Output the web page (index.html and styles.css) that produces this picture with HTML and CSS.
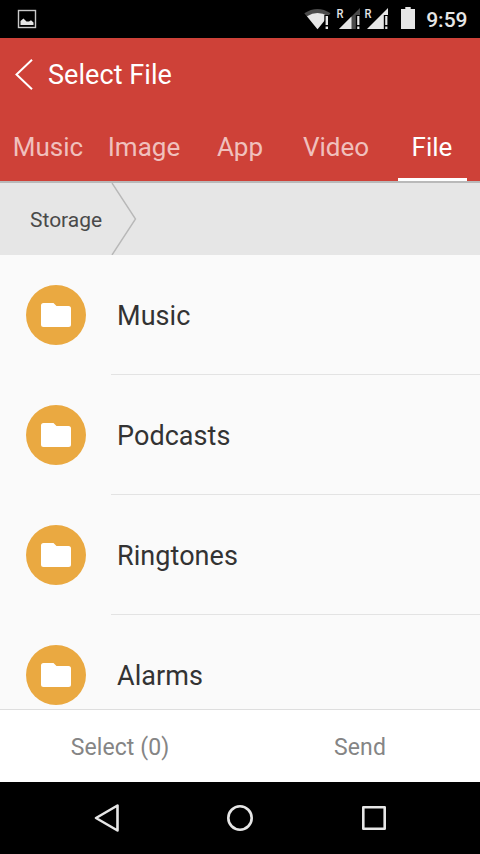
FILE: index.html
```html
<!DOCTYPE html>
<html lang="en">
<head>
<meta charset="utf-8">
<title>Select File</title>
<link rel="stylesheet" href="styles.css">
</head>
<body>
<svg class="defs" width="0" height="0" aria-hidden="true">
  <symbol id="folder" viewBox="0 0 30 24">
    <path d="M2.500 0H12.500L15.500 3H27.500Q30 3 30 5.500V21.500Q30 24 27.500 24H2.500Q0 24 0 21.500V2.500Q0 0 2.500 0Z" fill="#fff"/>
  </symbol>
</svg>
<div class="screen">
  <div class="status">
    <svg class="picture" width="20" height="20" viewBox="0 0 20 20">
      <rect x="1.500" y="1.500" width="17" height="17" fill="none" stroke="#c9c9c9" stroke-width="1.400"/>
      <path d="M3.500 16V12L6.500 9.500 9.500 12.500 12 12.500 14 11.300 16.500 13.500V16Z" fill="#e6e6e6"/>
    </svg>
    <svg class="signals" width="116" height="38" viewBox="302 0 116 38">
      <path d="M304.300 13.300Q317.500 4.500 330.500 13.300L317.500 29.200Z" fill="#4a4a4a"/>
      <path d="M307 16.200Q317.500 9.800 328 16.200L317.500 29.200Z" fill="#e6e6e6"/>
      <path d="M324.300 15H330.500V30H324.300Z" fill="#000"/>
      <path d="M325.600 16H328V25H325.600ZM325.600 26.500H328V29H325.600Z" fill="#e6e6e6"/>
      <path d="M339 29L360 8V29Z" fill="#4a4a4a"/>
      <path d="M339 29L351.500 16.500V29Z" fill="#e6e6e6"/>
      <path d="M355.800 15H361V30H355.800Z" fill="#000"/>
      <path d="M357.200 16H359.400V25H357.200ZM357.200 26.500H359.400V29H357.200Z" fill="#e6e6e6"/>
      <path d="M367 29L388 8V29Z" fill="#e6e6e6"/>
      <path d="M383.800 15H389V30H383.800Z" fill="#000"/>
      <path d="M385.200 16H387.400V25H385.200ZM385.200 26.500H387.400V29H385.200Z" fill="#e6e6e6"/>
      <text class="roam" x="336.500" y="17.500" textLength="7" lengthAdjust="spacingAndGlyphs">R</text>
      <text class="roam" x="364.500" y="17.500" textLength="7" lengthAdjust="spacingAndGlyphs">R</text>
      <path d="M405.300 7H410.700V9H415V29H401V9H405.300Z" fill="#e6e6e6"/>
    </svg>
    <span class="clock">9:59</span>
  </div>
  <header class="header">
    <div class="titlebar">
      <svg class="back" width="20" height="34" viewBox="0 0 20 34"><path d="M18 1.800L2.500 16.500 18 31.200" fill="none" stroke="#fff" stroke-width="2"/></svg>
      <h1 class="title">Select File</h1>
    </div>
    <nav class="tabs">
      <span class="tab"><span class="label">Music</span></span>
      <span class="tab"><span class="label">Image</span></span>
      <span class="tab"><span class="label">App</span></span>
      <span class="tab"><span class="label">Video</span></span>
      <span class="tab active"><span class="label">File</span></span>
    </nav>
  </header>
  <div class="crumbs">
    <span class="crumb">Storage</span>
    <svg width="26" height="72" viewBox="0 0 26 72"><path d="M1 0L24.500 36 1 72" fill="none" stroke="#b8b8b8" stroke-width="1.400"/></svg>
  </div>
  <main class="list">
    <div class="row"><span class="disc"><svg width="30" height="24"><use href="#folder"/></svg></span><span class="name">Music</span></div>
    <div class="row"><span class="disc"><svg width="30" height="24"><use href="#folder"/></svg></span><span class="name">Podcasts</span></div>
    <div class="row"><span class="disc"><svg width="30" height="24"><use href="#folder"/></svg></span><span class="name">Ringtones</span></div>
    <div class="row"><span class="disc"><svg width="30" height="24"><use href="#folder"/></svg></span><span class="name">Alarms</span></div>
  </main>
  <footer class="actions">
    <span class="action">Select (0)</span>
    <span class="action">Send</span>
  </footer>
  <div class="navbar">
    <svg width="480" height="72" viewBox="0 782 480 72" fill="none" stroke="#e6e6e6" stroke-width="2.600" stroke-linejoin="round">
      <path d="M117.500 805.500V830.500L96 818Z"/>
      <circle cx="240" cy="818" r="11.700"/>
      <rect x="363.300" y="807.300" width="21.400" height="21.400"/>
    </svg>
  </div>
</div>
</body>
</html>
```
FILE: styles.css
```css
* { box-sizing: border-box; }
body { margin: 0; font-family: Roboto, sans-serif; }
.defs { display: none; }
.screen { display: flex; flex-direction: column; width: 480px; height: 854px; overflow: hidden; background: #fafafa; }
.status { display: flex; align-items: center; flex: 0 0 38px; padding: 0 12.5px 0 17px; background: #000; color: #e6e6e6; }
.picture { margin-top: -1px; }
.signals { margin-left: auto; }
.roam { font-size: 12px; font-weight: 500; fill: #e6e6e6; }
.clock { width: 42px; margin-left: 7.5px; padding-top: 2px; font-size: 21px; line-height: 36px; font-weight: 500; text-align: right; white-space: nowrap; }
.header { flex: 0 0 143px; background: #ce4138; color: #fff; }
.titlebar { display: flex; align-items: center; height: 73px; padding-left: 14px; }
.title { margin: 0 0 0 14px; font-size: 27px; line-height: 32px; font-weight: 400; letter-spacing: 0.06px; }
.tabs { display: flex; height: 70px; }
.tab { display: flex; justify-content: center; flex: 1; padding-top: 19px; font-size: 26px; line-height: 34px; color: #f0c0bd; }
.active { color: #fff; }
.active .label { width: 69px; height: 51px; border-bottom: 3px solid #fff; text-align: center; }
.crumbs { display: flex; align-items: center; flex: 0 0 74px; padding-left: 30px; border-top: 2px solid #b9b9b9; background: #e6e6e6; }
.crumb { width: 81px; padding-top: 2px; font-size: 21px; color: #4a4a4a; }
.list { flex: 1; min-height: 0; overflow: hidden; }
.row { display: flex; align-items: center; height: 120px; padding-left: 26px; background: linear-gradient(#e3e3e3, #e3e3e3) 111px 119px / 369px 1px no-repeat; }
.disc { display: flex; align-items: center; justify-content: center; width: 60px; height: 60px; border-radius: 50%; background: #eaa941; }
.name { margin-left: 31px; padding-top: 2px; font-size: 27px; line-height: 32px; letter-spacing: 0.06px; color: #333; }
.actions { display: flex; flex: 0 0 73px; border-top: 1px solid #dedede; background: #fff; }
.action { flex: 1; padding-top: 4px; text-align: center; font-size: 23px; line-height: 68px; letter-spacing: 0.1px; color: #858585; }
.navbar { flex: 0 0 72px; background: #000; }
.navbar svg { display: block; }
```
